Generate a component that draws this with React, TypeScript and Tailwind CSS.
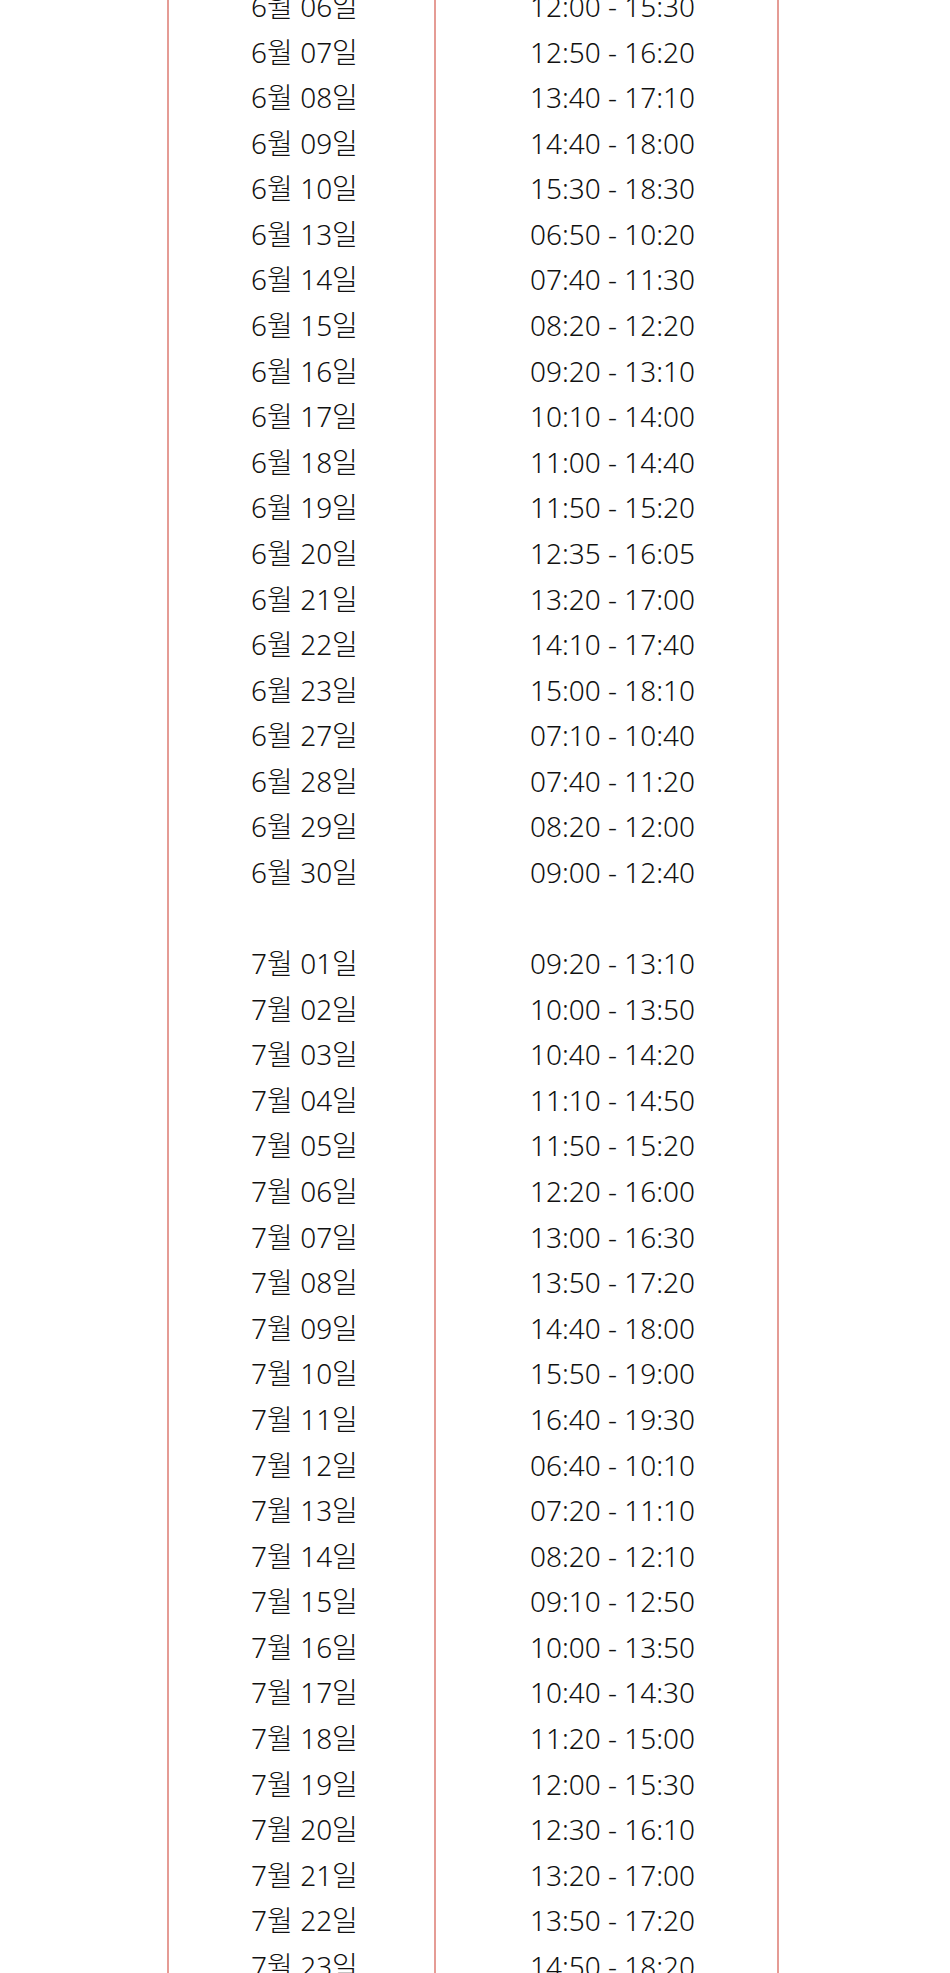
const june: [string, string][] = [
  ["06", "12:00 - 15:30"],
  ["07", "12:50 - 16:20"],
  ["08", "13:40 - 17:10"],
  ["09", "14:40 - 18:00"],
  ["10", "15:30 - 18:30"],
  ["13", "06:50 - 10:20"],
  ["14", "07:40 - 11:30"],
  ["15", "08:20 - 12:20"],
  ["16", "09:20 - 13:10"],
  ["17", "10:10 - 14:00"],
  ["18", "11:00 - 14:40"],
  ["19", "11:50 - 15:20"],
  ["20", "12:35 - 16:05"],
  ["21", "13:20 - 17:00"],
  ["22", "14:10 - 17:40"],
  ["23", "15:00 - 18:10"],
  ["27", "07:10 - 10:40"],
  ["28", "07:40 - 11:20"],
  ["29", "08:20 - 12:00"],
  ["30", "09:00 - 12:40"],
];

const july: [string, string][] = [
  ["01", "09:20 - 13:10"],
  ["02", "10:00 - 13:50"],
  ["03", "10:40 - 14:20"],
  ["04", "11:10 - 14:50"],
  ["05", "11:50 - 15:20"],
  ["06", "12:20 - 16:00"],
  ["07", "13:00 - 16:30"],
  ["08", "13:50 - 17:20"],
  ["09", "14:40 - 18:00"],
  ["10", "15:50 - 19:00"],
  ["11", "16:40 - 19:30"],
  ["12", "06:40 - 10:10"],
  ["13", "07:20 - 11:10"],
  ["14", "08:20 - 12:10"],
  ["15", "09:10 - 12:50"],
  ["16", "10:00 - 13:50"],
  ["17", "10:40 - 14:30"],
  ["18", "11:20 - 15:00"],
  ["19", "12:00 - 15:30"],
  ["20", "12:30 - 16:10"],
  ["21", "13:20 - 17:00"],
  ["22", "13:50 - 17:20"],
  ["23", "14:50 - 18:20"],
];

function Row({ date, time }: { date: string; time: string }) {
  return (
    <>
      <div className="border-r-2 border-[#e59c95] text-center pl-[6px]">{date}</div>
      <div className="text-center pl-[12px] whitespace-pre">{time}</div>
    </>
  );
}

export default function App() {
  return (
    <div className="bg-white h-[1973px] overflow-hidden">
      <div
        className="ml-[167px] w-[612px] border-x-2 border-[#e59c95] grid grid-cols-[267px_341px] -mt-[16px] pb-[40px] text-[28px] font-light leading-[45.58px] text-[#111]"
        style={{ fontFamily: '"Noto Sans", "Noto Sans CJK KR", sans-serif' }}
      >
        {june.map(([d, t]) => (
          <Row key={"6-" + d} date={`6월 ${d}일`} time={t} />
        ))}
        <Row date={"\u00a0"} time={"\u00a0"} />
        {july.map(([d, t]) => (
          <Row key={"7-" + d} date={`7월 ${d}일`} time={t} />
        ))}
      </div>
    </div>
  );
}
